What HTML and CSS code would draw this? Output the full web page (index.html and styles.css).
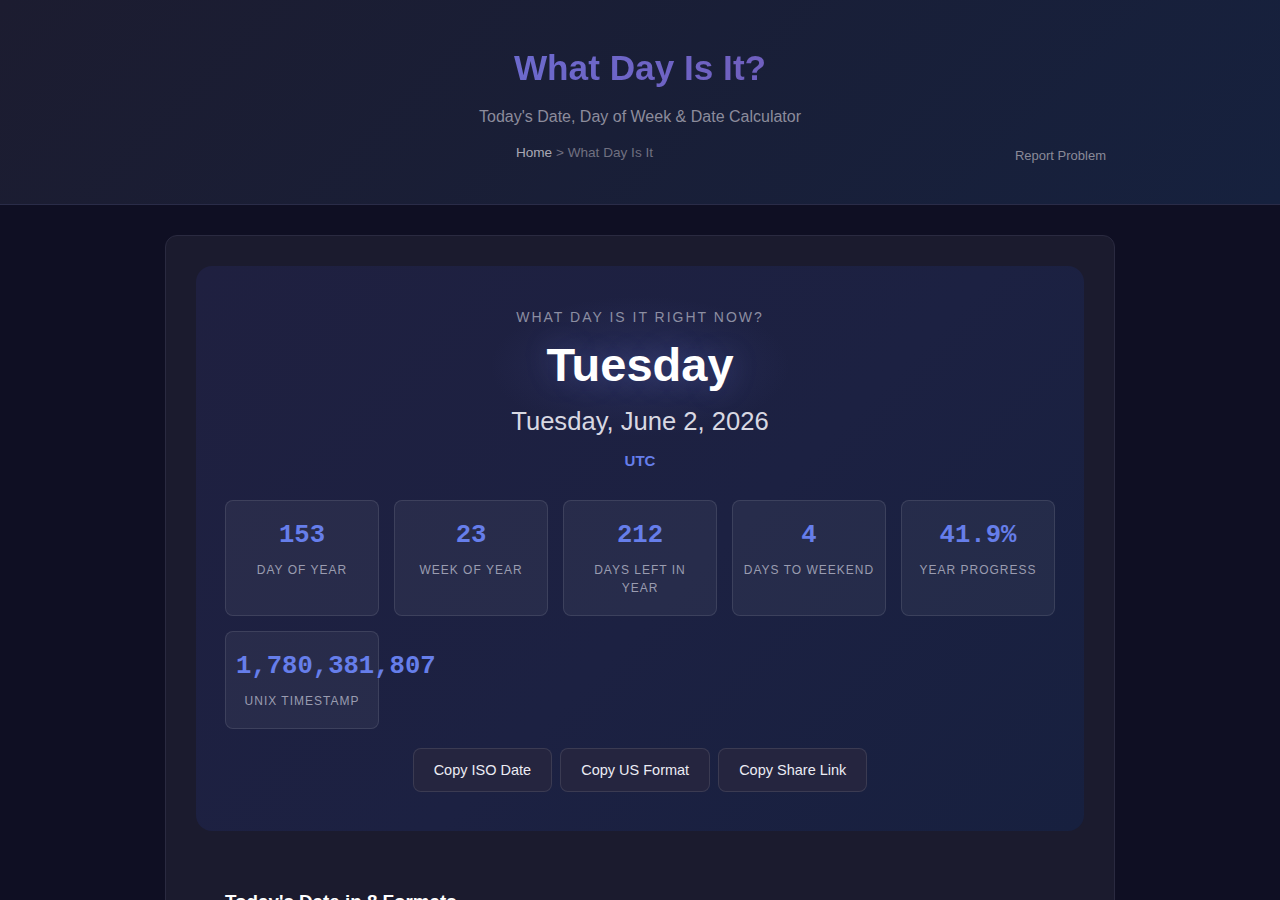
FILE: index.html
```html
<!DOCTYPE html>
<html lang="en">
<head>
    <meta charset="UTF-8">
    <meta name="viewport" content="width=device-width, initial-scale=1.0">
    <title>What Day Is It? - Today's Date &amp; Day of Week</title>
    <link rel="stylesheet" href="styles.css">
</head>
<body>

    <header class="site-header">
        <h1>What Day Is It?</h1>
        <p class="subtitle">Today's Date, Day of Week &amp; Date Calculator</p>
        <div class="header-row">
            <nav class="breadcrumb">
                <a href="#">Home</a> &gt; What Day Is It
            </nav>
            <a class="report-link" href="#">Report Problem</a>
        </div>
    </header>

    <main class="page">
        <div class="tool-card">

            <section class="hero">
                <div class="hero-label">What day is it right now?</div>
                <div class="hero-day" id="day-name">Tuesday</div>
                <div class="hero-date" id="full-date">Tuesday, June 2, 2026</div>
                <div class="hero-zone">UTC</div>

                <div class="stats">
                    <div class="stat">
                        <div class="stat-value">153</div>
                        <div class="stat-label">Day of Year</div>
                    </div>
                    <div class="stat">
                        <div class="stat-value">23</div>
                        <div class="stat-label">Week of Year</div>
                    </div>
                    <div class="stat">
                        <div class="stat-value">212</div>
                        <div class="stat-label">Days Left in Year</div>
                    </div>
                    <div class="stat">
                        <div class="stat-value">4</div>
                        <div class="stat-label">Days to Weekend</div>
                    </div>
                    <div class="stat">
                        <div class="stat-value">41.9%</div>
                        <div class="stat-label">Year Progress</div>
                    </div>
                    <div class="stat">
                        <div class="stat-value">1,780,381,807</div>
                        <div class="stat-label">Unix Timestamp</div>
                    </div>
                </div>

                <div class="copy-buttons">
                    <button class="copy-btn">Copy ISO Date</button>
                    <button class="copy-btn">Copy US Format</button>
                    <button class="copy-btn">Copy Share Link</button>
                </div>
            </section>

            <section class="formats">
                <h2>Today's Date in 8 Formats</h2>
            </section>

        </div>
    </main>

</body>
</html>
```

FILE: styles.css
```css
body {
    margin: 0;
    padding: 0;
    background-color: #0f0f23;
    color: #e0e0e8;
    font-family: "Liberation Sans", Arial, sans-serif;
}

a {
    text-decoration: none;
}

/* Header */

.site-header {
    background: linear-gradient(135deg, #1c1c30 0%, #16213e 100%);
    border-bottom: 1px solid #2a2c48;
    padding: 47px 20px 41px;
    text-align: center;
}

.site-header h1 {
    margin: 0;
    font-size: 35.2px;
    line-height: 42px;
    font-weight: bold;
    background: linear-gradient(90deg, #667eea, #764ba2);
    -webkit-background-clip: text;
    background-clip: text;
    color: transparent;
}

.subtitle {
    margin: 19px 0 0;
    font-size: 16px;
    line-height: 18px;
    color: #8c8c9c;
}

.header-row {
    display: flex;
    align-items: flex-start;
    gap: 20px;
    max-width: 932px;
    margin: 19px auto 0;
}

.breadcrumb {
    flex: 1;
    font-size: 13.6px;
    line-height: 16px;
    color: #707080;
}

.breadcrumb a {
    color: #a8a8b4;
}

.report-link {
    margin-top: 3px;
    font-size: 13px;
    line-height: 15px;
    color: #8a8a98;
}

/* Main card */

.page {
    padding: 30px 20px 0;
}

.tool-card {
    max-width: 888px;
    margin: 0 auto;
    padding: 30px 30px 0;
    background-color: #1b1b2e;
    border: 1px solid #2a2a40;
    border-radius: 12px;
}

.hero {
    padding: 40px 29px 39px;
    border-radius: 16px;
    text-align: center;
    background:
        radial-gradient(ellipse 150px 70px at 50% 100px, rgba(80, 90, 170, 0.2), transparent),
        linear-gradient(135deg, #1f2040 0%, #1c2142 55%, #17203f 100%);
}

.hero-label {
    font-size: 14px;
    line-height: 22px;
    letter-spacing: 2px;
    text-transform: uppercase;
    color: #8c8ea2;
}

.hero-day {
    margin-top: 9px;
    font-size: 47px;
    line-height: 56px;
    font-weight: bold;
    color: #ffffff;
    text-shadow: 0 0 28px rgba(120, 130, 230, 0.3);
}

.hero-date {
    margin-top: 13px;
    font-size: 25.6px;
    line-height: 31px;
    color: #d8d8e2;
}

.hero-zone {
    margin-top: 15px;
    font-size: 15px;
    line-height: 18px;
    font-weight: bold;
    color: #667eea;
}

/* Stats grid */

.stats {
    display: grid;
    grid-template-columns: repeat(5, 1fr);
    gap: 15px;
    margin-top: 30px;
}

.stat {
    min-width: 0;
    padding: 19px 10px 18px;
    background-color: rgba(255, 255, 255, 0.05);
    border: 1px solid rgba(255, 255, 255, 0.1);
    border-radius: 8px;
}

.stat-value {
    font-family: "Liberation Mono", "Courier New", monospace;
    font-size: 25.6px;
    line-height: 31px;
    font-weight: bold;
    color: #667eea;
    white-space: nowrap;
}

.stat-label {
    margin-top: 10px;
    font-size: 12px;
    line-height: 18px;
    letter-spacing: 1px;
    text-transform: uppercase;
    color: #9a9cb0;
}

/* Copy buttons */

.copy-buttons {
    display: flex;
    justify-content: center;
    gap: 8px;
    margin-top: 19px;
}

.copy-btn {
    padding: 13px 20px;
    font-family: "Liberation Sans", Arial, sans-serif;
    font-size: 14.5px;
    line-height: 16px;
    color: #ececf4;
    background-color: #25253f;
    border: 1px solid rgba(255, 255, 255, 0.1);
    border-radius: 8px;
    cursor: pointer;
}

.copy-btn:hover {
    background-color: #2e2e4c;
}

/* Formats section */

.formats {
    padding: 59px 29px 30px;
}

.formats h2 {
    margin: 0;
    font-size: 18.8px;
    line-height: 23px;
    color: #ffffff;
}
```
